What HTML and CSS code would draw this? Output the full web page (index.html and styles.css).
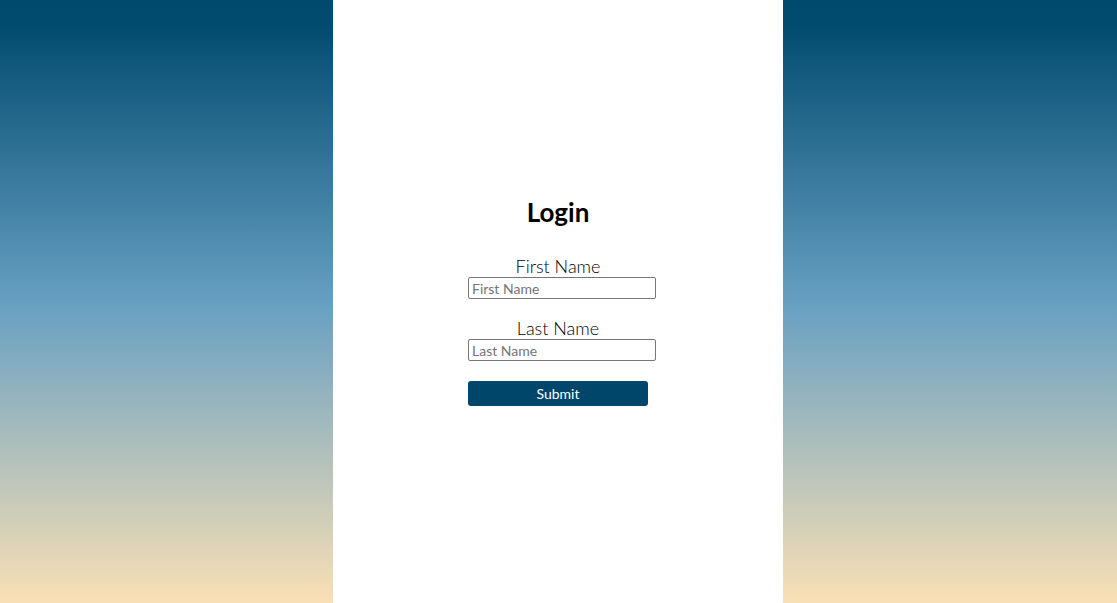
FILE: index.html
```html
<!DOCTYPE html>
<html lang="en">
<head>
<meta charset="utf-8">
<title>Login</title>
<link rel="stylesheet" href="styles.css">
</head>
<body>
<div class="page">
  <div class="side"></div>
  <main class="panel">
    <form class="login-form">
      <h1 class="title">Login</h1>
      <div class="field">
        <label class="field-label" for="first">First Name</label>
        <input class="field-input" id="first" type="text" placeholder="First Name">
      </div>
      <div class="field">
        <label class="field-label" for="last">Last Name</label>
        <input class="field-input" id="last" type="text" placeholder="Last Name">
      </div>
      <button class="submit" type="button">Submit</button>
    </form>
  </main>
  <div class="side"></div>
</div>
</body>
</html>
```
FILE: styles.css
```css
* { box-sizing: border-box; }
html, body { margin: 0; padding: 0; height: 100%; }
body {
  font-family: "Lato", "Open Sans", sans-serif;
  color: #000;
}
.page {
  height: 603px;
  display: grid;
  grid-template-columns: 333px 450px 1fr;
  background: linear-gradient(to bottom, #004a6e 0%, #014b6f 4%, #669fc2 50%, #f9e0b5 100%);
}
.panel {
  background: #fff;
  display: flex;
  align-items: center;
  justify-content: center;
}
.login-form {
  width: 180px;
  display: flex;
  flex-direction: column;
  align-items: stretch;
  text-align: center;
  padding-bottom: 1px;
}
.title {
  margin: 0 0 28px;
  font-size: 26px;
  line-height: 32px;
  font-weight: 700;
}
.field {
  display: flex;
  flex-direction: column;
  align-items: flex-start;
  margin-bottom: 19px;
}
.field-label {
  display: block;
  width: 180px;
  text-align: center;
  font-size: 18px;
  line-height: 21px;
  font-weight: 300;
  color: #000;
}
.field-input {
  width: 188px;
  height: 22px;
  margin: 0;
  padding: 1px 3px;
  border: 1px solid #767676;
  border-radius: 2px;
  font-family: inherit;
  font-size: 14px;
  font-weight: 400;
  color: #000;
  background: #fff;
}
.field-input::placeholder { color: #757575; }
.field + .field { margin-bottom: 20px; }
.submit {
  width: 180px;
  height: 25px;
  margin: 0;
  border: none;
  border-radius: 3px;
  background: #00466a;
  color: #fff;
  font-family: inherit;
  font-size: 14px;
  cursor: pointer;
}
```
